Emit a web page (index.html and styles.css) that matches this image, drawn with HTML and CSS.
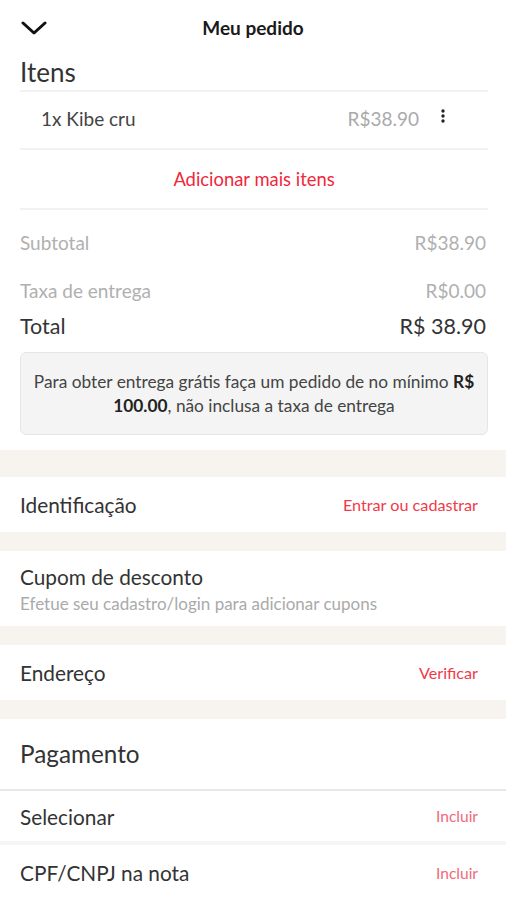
FILE: index.html
```
<!DOCTYPE html>
<html lang="pt-BR">
<head>
  <meta charset="UTF-8">
  <title>Meu pedido</title>
  <link rel="stylesheet" href="styles.css">
</head>
<body>

  <div class="header">
    <svg class="back" width="26" height="14" viewBox="0 0 26 14">
      <path d="M2 2 L13 12 L24 2" fill="none" stroke="#111" stroke-width="3" stroke-linecap="round" stroke-linejoin="round"/>
    </svg>
    <h1>Meu pedido</h1>
  </div>

  <div class="block">
    <h2 class="itens-title">Itens</h2>
    <div class="item">
      <span class="item-name">1x Kibe cru</span>
      <span class="item-price">R$38.90</span>
      <svg class="kebab" width="4" height="14" viewBox="0 0 4 14">
        <circle cx="2" cy="2" r="1.7" fill="#222"/>
        <circle cx="2" cy="7" r="1.7" fill="#222"/>
        <circle cx="2" cy="12" r="1.7" fill="#222"/>
      </svg>
    </div>
    <div class="add-more">Adicionar mais itens</div>

    <div class="totals">
      <div class="line muted">
        <span>Subtotal</span>
        <span>R$38.90</span>
      </div>
      <div class="line muted">
        <span>Taxa de entrega</span>
        <span>R$0.00</span>
      </div>
      <div class="line total">
        <span>Total</span>
        <span>R$ 38.90</span>
      </div>
    </div>

    <div class="notice">
      Para obter entrega grátis faça um pedido de no mínimo <b>R$</b> <b>100.00</b>, não inclusa a taxa de entrega
    </div>
  </div>

  <div class="sep first"></div>

  <div class="row">
    <span class="row-label">Identificação</span>
    <span class="row-link">Entrar ou cadastrar</span>
  </div>

  <div class="sep"></div>

  <div class="row coupon">
    <span class="row-label">Cupom de desconto</span>
    <span class="row-sub">Efetue seu cadastro/login para adicionar cupons</span>
  </div>

  <div class="sep"></div>

  <div class="row">
    <span class="row-label">Endereço</span>
    <span class="row-link">Verificar</span>
  </div>

  <div class="sep"></div>

  <div class="pay-title">Pagamento</div>

  <div class="row pay-row">
    <span class="row-label">Selecionar</span>
    <span class="row-link light">Incluir</span>
  </div>
  <div class="row pay-row">
    <span class="row-label">CPF/CNPJ na nota</span>
    <span class="row-link light">Incluir</span>
  </div>

</body>
</html>
```

FILE: styles.css
```
body {
  margin: 0;
  background-color: #fff;
  color: #333;
  font-family: Lato, "Noto Sans", sans-serif;
}

.header {
  position: relative;
  height: 54px;
  display: flex;
  align-items: center;
  justify-content: center;
}

.header .back {
  position: absolute;
  left: 21px;
  top: 21px;
}

.header h1 {
  margin: 0;
  font-size: 19px;
  font-weight: 700;
  color: #1a1a1a;
}

.block {
  padding: 0 18px 15px 20px;
}

.itens-title {
  margin: 0;
  font-size: 26px;
  font-weight: 400;
  color: #333;
  line-height: 36px;
  border-bottom: 2px solid #f1f1f1;
}

.item {
  display: flex;
  align-items: center;
  height: 52px;
  padding: 0 69px 4px 21px;
  position: relative;
  border-bottom: 2px solid #f1f1f1;
  font-size: 19px;
}

.item-name {
  flex: 1;
  color: #444;
}

.item-price {
  color: #aaa;
}

.item .kebab {
  position: absolute;
  right: 43px;
  top: 17px;
}

.add-more {
  height: 58px;
  line-height: 58px;
  text-align: center;
  color: #f0283c;
  font-size: 18.4px;
  border-bottom: 2px solid #f1f1f1;
}

.totals {
  margin-top: 8px;
  padding-right: 2px;
}

.line {
  display: flex;
  justify-content: space-between;
  align-items: center;
}

.line.muted {
  color: #b0b0b0;
  font-size: 19px;
  height: 48px;
}

.line.total {
  color: #333;
  font-size: 21.5px;
  height: 24px;
}

.notice {
  margin-top: 14px;
  background-color: #f4f4f4;
  border: 1px solid #e6e6e6;
  border-radius: 6px;
  padding: 17px 6px 16px;
  text-align: center;
  font-size: 17.3px;
  line-height: 24px;
  color: #444;
}

.notice b {
  color: #222;
}

.sep {
  height: 19px;
  background-color: #f7f3ee;
}

.sep.first {
  height: 27px;
}

.row {
  display: flex;
  justify-content: space-between;
  align-items: center;
  height: 55px;
  padding: 0 28px 0 20px;
}

.row-label {
  font-size: 20.8px;
  color: #333;
}

.row-link {
  font-size: 16.2px;
  color: #f03a4a;
}

.row-link.light {
  font-size: 15.5px;
  color: #f06a7a;
}

.row.coupon {
  height: 75px;
  flex-direction: column;
  align-items: flex-start;
  justify-content: center;
  gap: 4px;
}

.row-sub {
  font-size: 17px;
  color: #aaa;
}

.pay-title {
  height: 70px;
  line-height: 70px;
  padding-left: 20px;
  font-size: 24.3px;
  color: #333;
  border-bottom: 2px solid #e8e8e8;
}

.pay-row {
  height: 50px;
}

.pay-row + .pay-row {
  height: 55px;
  border-top: 4px solid #f5f5f5;
}
```
